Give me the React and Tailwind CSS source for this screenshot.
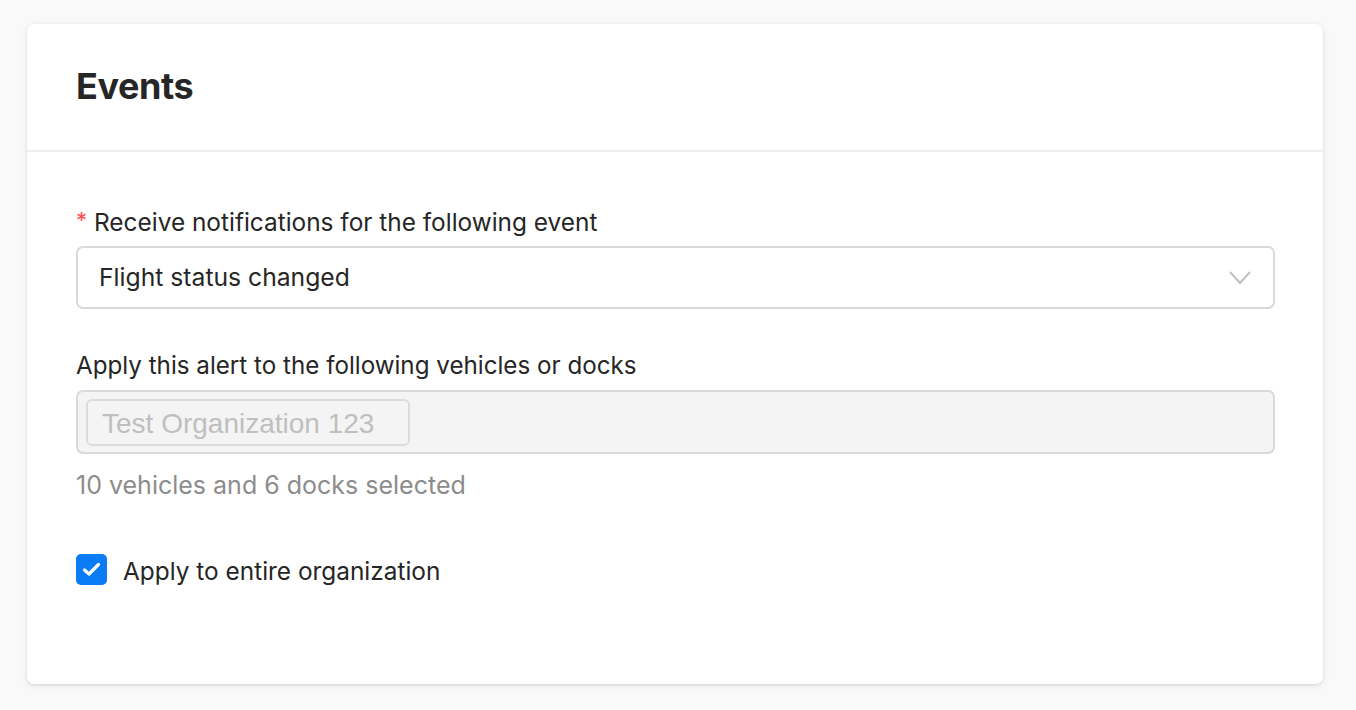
import React from "react";

export default function App() {
  return (
    <div className="min-h-[710px] w-full bg-[#f9f9f9] pt-[24px] pl-[27px] pr-[33px] pb-[26px]" style={{ fontFamily: "Inter, 'Noto Sans', sans-serif" }}>
      <div className="w-[1296px] rounded-[7px] bg-white shadow-[0_1px_3px_rgba(0,0,0,0.12),0_2px_10px_rgba(0,0,0,0.06)]">
        <div className="h-[128px] border-b-2 border-[#efefef] pl-[49px] flex items-center">
          <h1 className="text-[36px] font-bold text-[#262626] tracking-[-0.4px] leading-none pb-[2px]">Events</h1>
        </div>
        <div className="px-[49px] pt-[54px] pb-[94px]">
          <div className="flex items-center h-[32px] text-[24.4px] text-[#262626] leading-none">
            <span className="text-[#ff4d4f] mr-[7px] text-[22px] self-start mt-[3px]">*</span>
            <span>Receive notifications for the following event</span>
          </div>
          <div className="mt-[8px] h-[63px] w-[1199px] rounded-[7px] border-2 border-[#d9d9d9] flex items-center justify-between pl-[21px] pr-[22px] text-[24.7px] text-[#262626]">
            <span>Flight status changed</span>
            <svg width="22" height="14" viewBox="0 0 22 14" fill="none" stroke="#bfbfbf" strokeWidth="2">
              <path d="M1 1 L11 12 L21 1" />
            </svg>
          </div>
          <div className="mt-[41px] h-[32px] flex items-center text-[24.2px] text-[#262626]">Apply this alert to the following vehicles or docks</div>
          <div className="mt-[8px] h-[64px] w-[1199px] rounded-[7px] border-2 border-[#d9d9d9] bg-[#f4f4f4] flex items-center pl-[8px]">
            <div className="h-[47px] rounded-[6px] border-2 border-[#dcdcdc] bg-[#f4f4f4] flex items-center pt-[3px] pl-[14px] pr-[34px] text-[28px] text-[#bfbfbf]" style={{ fontFamily: "'Liberation Sans', Arial, sans-serif" }}>Test Organization 123</div>
          </div>
          <div className="mt-[14px] text-[25px] text-[#8c8c8c] h-[36px] flex items-center">10 vehicles and 6 docks selected</div>
          <div className="mt-[46px] flex items-center gap-[16px]">
            <div className="w-[31px] h-[31px] rounded-[5px] bg-[#0a7cf5] flex items-center justify-center">
              <svg width="19" height="15" viewBox="0 0 19 15" fill="none" stroke="white" strokeWidth="3.2" strokeLinecap="round" strokeLinejoin="round">
                <path d="M2.5 8 L7 12 L16.5 2.5" />
              </svg>
            </div>
            <span className="text-[24.4px] text-[#262626] pt-[3px]">Apply to entire organization</span>
          </div>
        </div>
      </div>
    </div>
  );
}
